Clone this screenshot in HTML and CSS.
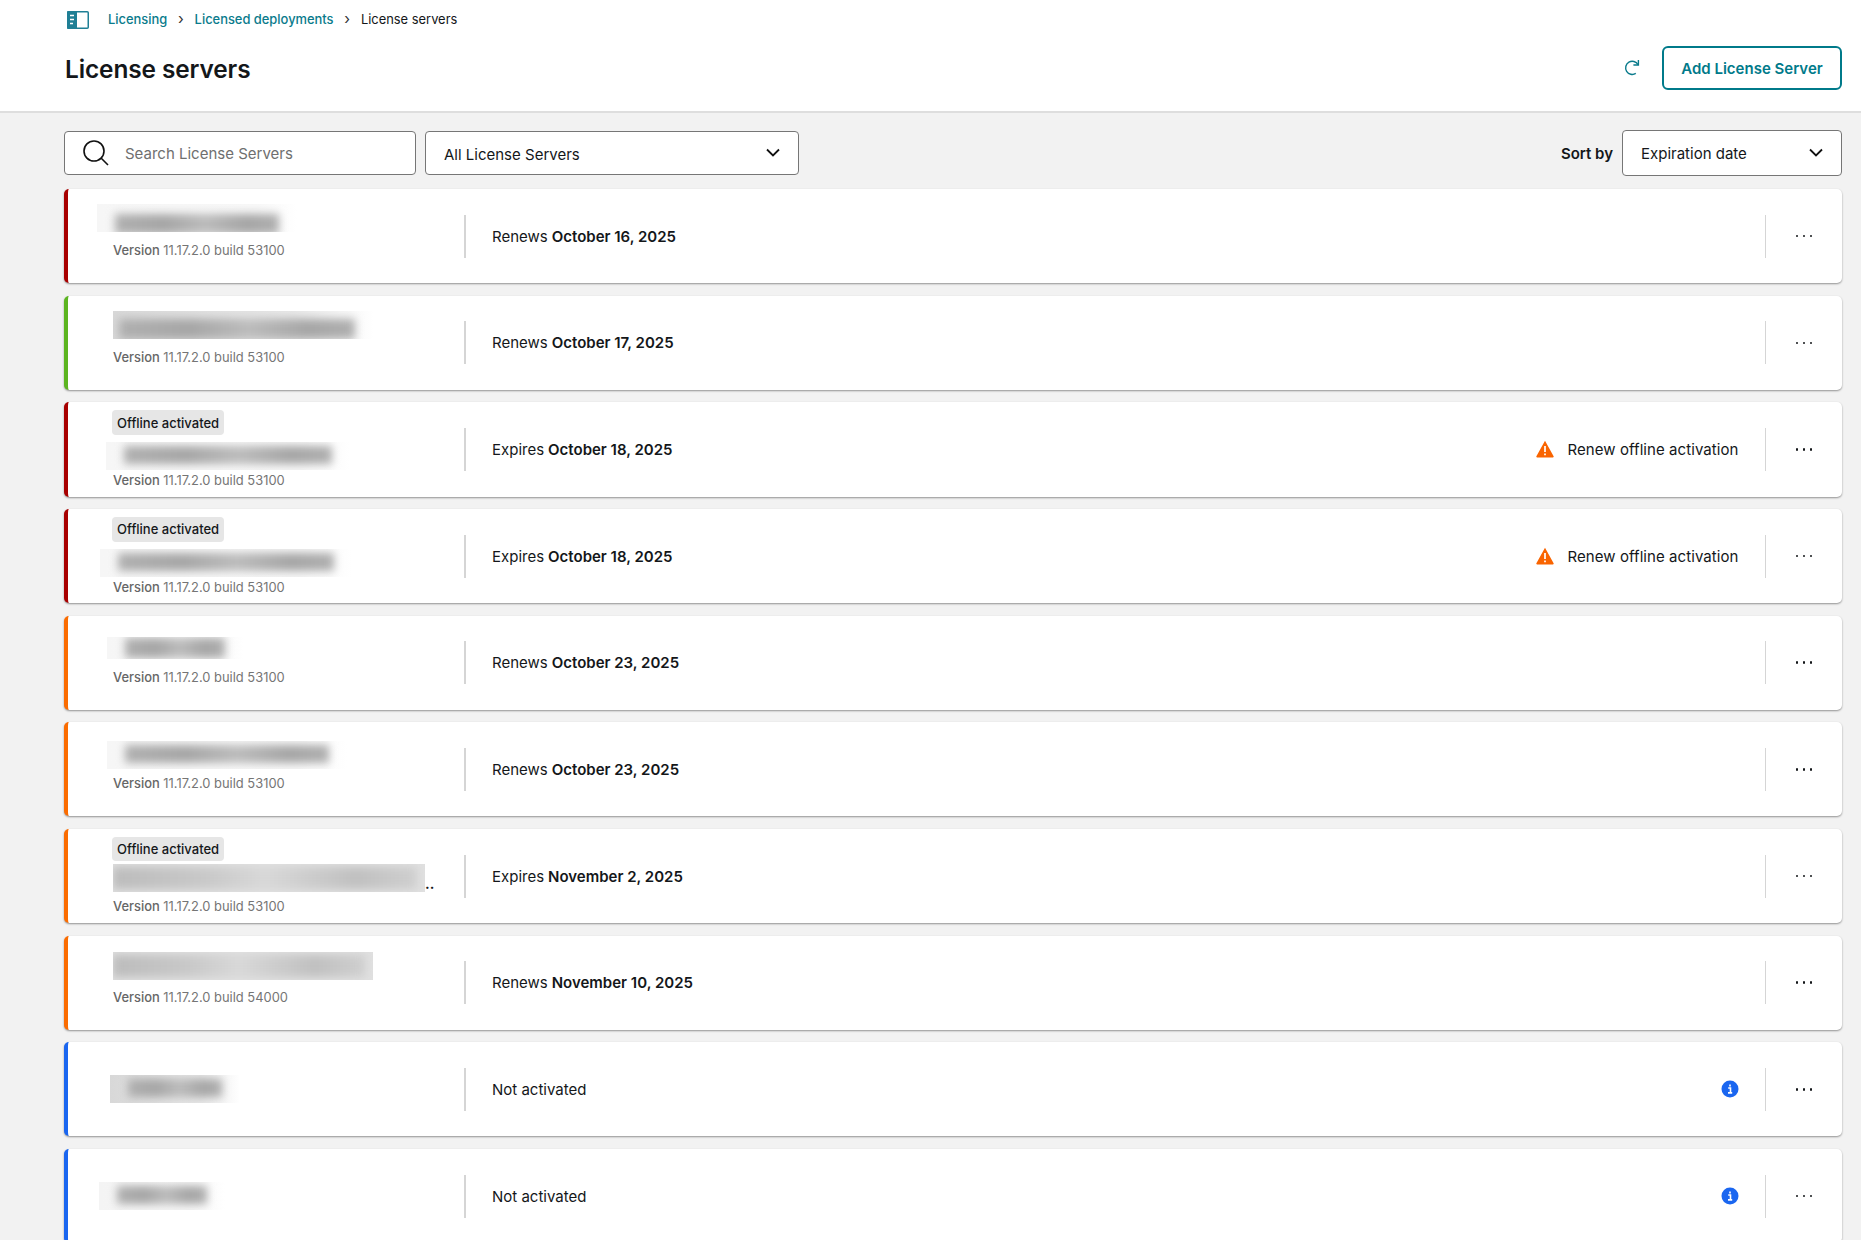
FILE: index.html
```html
<!DOCTYPE html>
<html lang="en">
<head>
<meta charset="utf-8">
<title>License servers</title>
<link rel="stylesheet" href="styles.css">
</head>
<body>
<header class="header">
  <nav class="crumbs">
    <svg class="panel-icon" width="22" height="18" viewBox="0 0 22 18"><rect x=".75" y=".75" width="20.5" height="16.5" rx="1" fill="#fff" stroke="#1f7f95" stroke-width="1.5"/><rect x="0" y="0" width="10" height="18" rx="1" fill="#1f7f95"/><path d="M3 4.5h4M3 8.5h4M3 12.5h3" stroke="#fff" stroke-width="1.6"/></svg>
    <a class="crumb-link crumb-first">Licensing</a>
    <span class="sep">›</span>
    <a class="crumb-link">Licensed deployments</a>
    <span class="sep">›</span>
    <span class="crumb-current">License servers</span>
  </nav>
  <div class="title-row">
    <h1 class="title">License servers</h1>
    <div class="actions">
      <svg class="refresh" width="18" height="18" viewBox="0 0 18 18" fill="none" stroke="#0a7b8c" stroke-width="1.4"><path d="M12.8 14.4A6.6 6.6 0 1 1 15 5.6"/><path d="M15.4 1v5h-5"/></svg>
      <button class="add-btn">Add License Server</button>
    </div>
  </div>
</header>
<main class="main">
  <div class="toolbar">
    <div class="search">
      <svg width="28" height="28" viewBox="0 0 28 28" fill="none" stroke="#111" stroke-width="1.6"><circle cx="12" cy="12" r="10"/><path d="M19 19l7 7"/></svg>
      <span class="placeholder">Search License Servers</span>
    </div>
    <div class="select select-all"><span class="select-text-low">All License Servers</span><svg class="chev" width="16" height="10" viewBox="0 0 16 10" fill="none" stroke="#111" stroke-width="1.8"><path d="M2 1.5l6 6 6-6"/></svg></div>
    <div class="sort">
      <span class="sort-label">Sort by</span>
      <div class="select select-sort"><span>Expiration date</span><svg class="chev" width="16" height="10" viewBox="0 0 16 10" fill="none" stroke="#111" stroke-width="1.8"><path d="M2 1.5l6 6 6-6"/></svg></div>
    </div>
  </div>

  <div class="list">
    <article class="card red plain">
      <div class="name-col"><div class="blur soft b1"></div><div class="version"><b>Version</b> 11.17.2.0 build 53100</div></div>
      <div class="status">Renews <b>October 16, 2025</b></div>
      <div class="more"><i></i><i></i><i></i></div>
    </article>
    <article class="card green plain">
      <div class="name-col"><div class="blur hard-fade b2"></div><div class="version"><b>Version</b> 11.17.2.0 build 53100</div></div>
      <div class="status">Renews <b>October 17, 2025</b></div>
      <div class="more"><i></i><i></i><i></i></div>
    </article>
    <article class="card red badged">
      <div class="name-col"><span class="badge">Offline activated</span><div class="blur soft b3"></div><div class="version"><b>Version</b> 11.17.2.0 build 53100</div></div>
      <div class="status">Expires <b>October 18, 2025</b></div>
      <div class="note"><svg width="18" height="18" viewBox="0 0 18 18"><path d="M9 .8L17.6 16.2a.8.8 0 0 1-.7 1.2H1.1a.8.8 0 0 1-.7-1.2z" fill="#f96400"/><path d="M9 6v6M9 13.4v1.8" stroke="#fff" stroke-width="1.7"/></svg><span>Renew offline activation</span></div>
      <div class="more"><i></i><i></i><i></i></div>
    </article>
    <article class="card red badged">
      <div class="name-col"><span class="badge">Offline activated</span><div class="blur soft b4"></div><div class="version"><b>Version</b> 11.17.2.0 build 53100</div></div>
      <div class="status">Expires <b>October 18, 2025</b></div>
      <div class="note"><svg width="18" height="18" viewBox="0 0 18 18"><path d="M9 .8L17.6 16.2a.8.8 0 0 1-.7 1.2H1.1a.8.8 0 0 1-.7-1.2z" fill="#f96400"/><path d="M9 6v6M9 13.4v1.8" stroke="#fff" stroke-width="1.7"/></svg><span>Renew offline activation</span></div>
      <div class="more"><i></i><i></i><i></i></div>
    </article>
    <article class="card orange plain">
      <div class="name-col"><div class="blur soft b5"></div><div class="version"><b>Version</b> 11.17.2.0 build 53100</div></div>
      <div class="status">Renews <b>October 23, 2025</b></div>
      <div class="more"><i></i><i></i><i></i></div>
    </article>
    <article class="card orange plain">
      <div class="name-col"><div class="blur soft b6"></div><div class="version"><b>Version</b> 11.17.2.0 build 53100</div></div>
      <div class="status">Renews <b>October 23, 2025</b></div>
      <div class="more"><i></i><i></i><i></i></div>
    </article>
    <article class="card orange badged">
      <div class="name-col"><span class="badge badge-tight">Offline activated</span><div class="name-line"><div class="blur hard b7"></div><span class="ellipsis">..</span></div><div class="version"><b>Version</b> 11.17.2.0 build 53100</div></div>
      <div class="status">Expires <b>November 2, 2025</b></div>
      <div class="more"><i></i><i></i><i></i></div>
    </article>
    <article class="card orange plain">
      <div class="name-col"><div class="blur hard b8"></div><div class="version"><b>Version</b> 11.17.2.0 build 54000</div></div>
      <div class="status">Renews <b>November 10, 2025</b></div>
      <div class="more"><i></i><i></i><i></i></div>
    </article>
    <article class="card blue bare">
      <div class="name-col"><div class="blur hard-fade b9"></div></div>
      <div class="status">Not activated</div>
      <div class="note"><svg width="18" height="18" viewBox="0 0 18 18"><circle cx="9" cy="9" r="8.5" fill="#1a66f0"/><path d="M7.2 8h2.3v4.6M7 12.9h4.2M9 4.4v2" stroke="#fff" stroke-width="1.6" fill="none"/></svg></div>
      <div class="more"><i></i><i></i><i></i></div>
    </article>
    <article class="card blue bare">
      <div class="name-col"><div class="blur soft-right b10"></div></div>
      <div class="status">Not activated</div>
      <div class="note"><svg width="18" height="18" viewBox="0 0 18 18"><circle cx="9" cy="9" r="8.5" fill="#1a66f0"/><path d="M7.2 8h2.3v4.6M7 12.9h4.2M9 4.4v2" stroke="#fff" stroke-width="1.6" fill="none"/></svg></div>
      <div class="more"><i></i><i></i><i></i></div>
    </article>
  </div>
</main>
</body>
</html>
```
FILE: styles.css
```css
* { box-sizing: border-box; }
html, body { margin: 0; height: 100%; overflow: hidden; }
body { font-family: Inter, "Liberation Sans", sans-serif; font-size: 14px; color: #14171a; background: #f2f2f2; }

.header { height: 113px; background: #fff; border-bottom: 2px solid #dedede; padding: 10px 19px 0 65px; }
.crumbs { display: flex; align-items: center; height: 18px; font-size: 12.9px; }
.panel-icon { margin-left: 2px; margin-right: 19px; flex: none; margin-top: 2px; }
.crumb-link { color: #0a7b8c; font-weight: 500; }
.crumb-current { color: #14171a; }
.sep { margin: 0 10.8px; font-size: 15px; line-height: 18px; color: #333; }
.title-row { display: flex; align-items: center; justify-content: space-between; margin-top: 18px; }
.title { margin: 0; font-size: 24.4px; font-weight: 600; letter-spacing: -.1px; line-height: 44px; position: relative; top: 1px; }
.actions { display: flex; align-items: center; gap: 21px; }
.add-btn { width: 180px; height: 44px; background: #fff; border: 2px solid #007a8a; border-radius: 6px; color: #007a8a; font: 600 15px Inter, "Liberation Sans", sans-serif; padding: 0; }

.main { padding: 17px 19px 0 64px; }
.toolbar { display: flex; align-items: center; height: 46px; gap: 9px; }
.search { width: 352px; height: 44px; display: flex; align-items: center; background: #fff; border: 1px solid #767676; border-radius: 4px; padding-left: 17px; gap: 15px; color: #6f6f6f; }
.placeholder { font-size: 15px; }
.select { height: 44px; display: flex; align-items: center; justify-content: space-between; background: #fff; border: 1px solid #767676; border-radius: 4px; font-size: 15px; padding: 0 17px 0 18px; }
.select-all { width: 374px; }
.select-text-low { position: relative; top: 1px; }
.chev { flex: none; }
.select-sort { width: 220px; height: 46px; }
.sort { margin-left: auto; display: flex; align-items: center; gap: 9px; }
.sort-label { font-weight: 600; font-size: 15px; }

.list { display: flex; flex-direction: column; gap: 12.47px; margin-top: 13px; }
.card { height: 94.2px; flex: none; display: flex; align-items: center; background: #fff; border-left: 4px solid #b00000; border-radius: 5px; box-shadow: 0 1px 2px rgba(0, 0, 0, .4); }
.red { border-left-color: #a80000; }
.green { border-left-color: #5cb520; }
.orange { border-left-color: #fb6c00; }
.blue { border-left-color: #1a66f0; }

.name-col { width: 396px; height: 100%; flex: none; display: flex; flex-direction: column; align-items: flex-start; padding-left: 45px; }
.plain .name-col { padding-top: 15px; }
.badged .name-col { padding-top: 8px; }
.bare .name-col { padding-top: 33px; }
.badge { height: 25px; display: flex; align-items: center; padding: 0 5px; margin-left: -1px; background: #e6e6e6; border-radius: 4px; font-size: 13px; font-weight: 500; margin-bottom: 7px; }
.badge-tight { height: 24px; margin-bottom: 3px; }
.version { font-size: 12.9px; color: #757575; line-height: 16px; }
.plain .version { margin-top: 11px; }
.badged .version { margin-top: 3px; }
.badged .name-line + .version { margin-top: 7px; }
.version b { font-weight: 500; color: #666; }

.blur { height: 28px; position: relative; overflow: hidden; flex: none; }
.blur::before { content: ""; position: absolute; top: 4px; bottom: 6px; left: 18px; right: 18px; background: linear-gradient(90deg, #b0b0b0, #a6a6a6 30%, #bcbcbc 55%, #a6a6a6 80%, #b0b0b0); filter: blur(4px); }
.b1::before { top: 10px; bottom: -2px; }
.b2::before { top: 8px; bottom: 0; left: 6px; }
.b7::before, .b8::before { left: 0; right: 8px; top: 3px; bottom: 3px; background: linear-gradient(90deg, #bcbcbc, #c8c8c8 30%, #d8d8d8 50%, #c0c0c0 80%, #cfcfcf); }
.soft { background: linear-gradient(90deg, rgba(240, 240, 240, .6), #f8f8f8 80%, #fff); }
.hard { background: #e0e0e0; }
.hard-fade { background: linear-gradient(90deg, #d8d8d8, #e8e8e8 70%, #fff); }
.soft-right { background: linear-gradient(90deg, #f4f4f4, #f6f6f6 70%, #fff); }
.b1 { width: 200px; margin-left: -16px; }
.b2 { width: 260px; }
.b3 { width: 244px; margin-left: -7px; }
.b4 { width: 252px; margin-left: -13px; }
.b5 { width: 136px; margin-left: -6px; margin-top: 6px; height: 22px; }
.b5::before { top: 1px; bottom: 1px; }
.b6 { width: 240px; margin-left: -6px; margin-top: 4px; margin-bottom: -4px; }
.b7 { width: 312px; }
.b8 { width: 260px; margin-top: 1px; margin-bottom: -1px; }
.b9 { width: 130px; margin-left: -3px; }
.b10 { width: 126px; margin-left: -14px; }
.name-line { display: flex; align-items: flex-end; }
.ellipsis { font-weight: 700; font-size: 14px; line-height: 17px; }

.status { padding-left: 26px; font-size: 15px; flex: 1; height: 43px; display: flex; align-items: center; gap: 4px; border-left: 2px solid #d5d5d5; }
.status b { font-weight: 600; }
.note { display: flex; align-items: center; gap: 13px; margin-right: 26px; font-size: 15px; letter-spacing: .07px; white-space: nowrap; }
.note svg { flex: none; margin-top: -1px; }
.more { width: 77.5px; height: 43px; flex: none; display: flex; align-items: center; justify-content: center; gap: 4.5px; border-left: 1px solid #d5d5d5; }
.more i { width: 2.5px; height: 2.5px; background: #14171a; border-radius: 50%; }
```
